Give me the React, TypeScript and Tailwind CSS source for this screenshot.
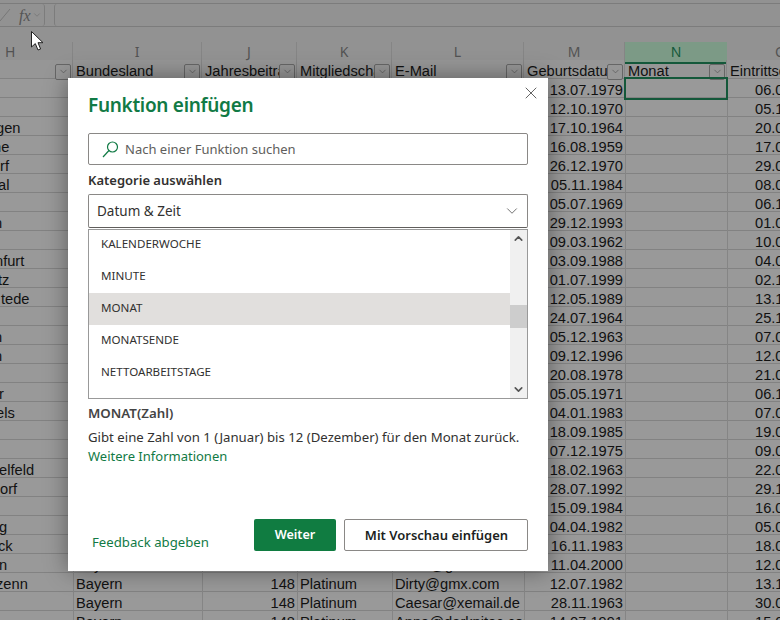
import { ChevronDown, ChevronUp, X } from 'lucide-react';

const columnGrid = 'grid grid-cols-[73px_129px_95px_95px_132px_101px_102px_108px]';

const letters = ['H', 'I', 'J', 'K', 'L', 'M', 'N', 'O'];
const headers = ['', 'Bundesland', 'Jahresbeitrag', 'Mitgliedschaft', 'E-Mail', 'Geburtsdatum', 'Monat', 'Eintrittsdatum'];

const rows = [
  { date: '13.07.1979', start: '06.0', city: '', shift: '' },
  { date: '12.10.1970', start: '05.1', city: '', shift: '' },
  { date: '17.10.1964', start: '20.0', city: 'gen', shift: '-ml-[4px]' },
  { date: '16.08.1959', start: '17.0', city: 'ne', shift: '-ml-[7px]' },
  { date: '26.12.1970', start: '29.0', city: 'rf', shift: '' },
  { date: '05.11.1984', start: '08.0', city: 'al', shift: '-ml-[2px]' },
  { date: '05.07.1969', start: '06.1', city: '', shift: '' },
  { date: '29.12.1993', start: '01.0', city: 'n', shift: '-ml-[6px]' },
  { date: '09.03.1962', start: '10.0', city: '', shift: '' },
  { date: '03.09.1988', start: '04.0', city: 'nfurt', shift: '-ml-[5px]' },
  { date: '01.07.1999', start: '02.1', city: 'tz', shift: '-ml-[2px]' },
  { date: '12.05.1989', start: '13.1', city: 'tede', shift: 'ml-[1px]' },
  { date: '24.07.1964', start: '25.1', city: '', shift: '' },
  { date: '05.12.1963', start: '07.0', city: 'n', shift: '-ml-[6px]' },
  { date: '09.12.1996', start: '12.0', city: 'n', shift: '-ml-[6px]' },
  { date: '20.08.1978', start: '21.0', city: '', shift: '' },
  { date: '05.05.1971', start: '06.1', city: 'r', shift: '-ml-[1px]' },
  { date: '04.01.1983', start: '07.0', city: 'els', shift: '-ml-[4px]' },
  { date: '18.09.1985', start: '19.0', city: '', shift: '' },
  { date: '07.12.1975', start: '09.0', city: '', shift: '' },
  { date: '18.02.1963', start: '22.0', city: 'elfeld', shift: '-ml-[1px]' },
  { date: '28.07.1992', start: '29.1', city: 'orf', shift: '' },
  { date: '15.09.1984', start: '16.0', city: '', shift: '' },
  { date: '04.04.1982', start: '05.0', city: 'g', shift: '-ml-[1px]' },
  { date: '16.11.1983', start: '18.0', city: 'ck', shift: '-ml-[2px]' },
  { date: '11.04.2000', start: '12.0', city: 'n', shift: '-ml-[1px]', state: 'Bayern', fee: '148', plan: 'Platinum', mail: 'Berta@gmx.com' },
  { date: '12.07.1982', start: '13.1', city: 'zenn', shift: '-ml-[4px]', state: 'Bayern', fee: '148', plan: 'Platinum', mail: 'Dirty@gmx.com' },
  { date: '28.11.1963', start: '30.0', city: '', shift: '', state: 'Bayern', fee: '148', plan: 'Platinum', mail: 'Caesar@xemail.de' },
  { date: '14.07.1991', start: '15.0', city: '', shift: '', state: 'Bayern', fee: '148', plan: 'Platinum', mail: 'Anna@darkpitec.com' },
];

const functions = ['KALENDERWOCHE', 'MINUTE', 'MONAT', 'MONATSENDE', 'NETTOARBEITSTAGE'];

function FilterButton() {
  return (
    <span className="mr-[1px] flex size-[16px] shrink-0 items-center justify-center rounded-[2px] border border-[#666] bg-[#969696]">
      <ChevronDown className="size-[11px] text-[#555]" strokeWidth={1.5} />
    </span>
  );
}

function Sheet() {
  return (
    <div className="font-['Liberation_Sans',sans-serif] text-[14.67px] leading-[23px] text-[#111]">
      <div className="h-[42px] bg-[#929292] pt-[3px]">
        <div className="flex h-[24px] gap-[9px] border-y border-[#7c7c7c]">
          <div className="flex w-[45px] shrink-0 items-center rounded-r-[3px] border-r border-[#7c7c7c] text-[#555]">
            <svg className="size-[14px] shrink-0" viewBox="0 0 14 14">
              <path d="M0 13 L10 1" stroke="#777" strokeWidth="1" />
            </svg>
            <span className="ml-[5px] font-['Liberation_Serif',serif] text-[16px] italic">fx</span>
            <ChevronDown className="ml-[1px] size-[10px] text-[#6d6d6d]" strokeWidth={1.5} />
          </div>
          <div className="flex-1 rounded-l-[3px] border-l border-[#7c7c7c]" />
        </div>
      </div>
      <div className={`${columnGrid} h-[18px] bg-[#929292] font-['Noto_Sans',sans-serif] text-[14px] leading-[20px] text-[#525252]`}>
        {letters.map((letter) => (
          <div
            key={letter}
            className={
              letter === 'N'
                ? 'border-b-2 border-[#14583a] bg-[#7c9a86] text-center text-[#14583a]'
                : letter === 'H'
                  ? 'border-r border-[#858585] pl-[5px]'
                  : 'border-r border-[#858585] text-center'
            }
          >
            {letter}
          </div>
        ))}
      </div>
      <div className={`${columnGrid} h-[19px] border-b border-[#828282] bg-[#969696]`}>
        {headers.map((header) => (
          <div key={header} className="flex min-w-0 items-center border-r border-[#858585] pl-[3px]">
            <span className="min-w-0 flex-1 overflow-hidden whitespace-nowrap">{header}</span>
            {header !== 'Eintrittsdatum' && <FilterButton />}
          </div>
        ))}
      </div>
      {rows.map((row, i) => (
        <div key={row.date} className={`${columnGrid} h-[19px] border-b border-[#828282] bg-[#999]`}>
          <div className="overflow-hidden whitespace-nowrap">
            <div className={row.shift}>{row.city}</div>
          </div>
          <div className="border-l border-[#858585] pl-[2px]">{row.state}</div>
          <div className="border-l border-[#858585] pr-[2px] text-right">{row.fee}</div>
          <div className="border-l border-[#858585] pl-[2px]">{row.plan}</div>
          <div className="overflow-hidden whitespace-nowrap border-l border-[#858585] pl-[2px]">{row.mail}</div>
          <div className="border-l border-[#858585] pr-[2px] text-right">{row.date}</div>
          <div className={i === 0 ? 'z-10 -mt-[1px] h-[21px] outline-2 -outline-offset-1 outline-[#14583a]' : 'border-l border-[#858585]'} />
          <div className="overflow-hidden whitespace-nowrap border-l border-[#858585] pl-[27px]">{row.start}</div>
        </div>
      ))}
    </div>
  );
}

function InsertFunctionDialog() {
  return (
    <div className="absolute left-[68px] top-[78px] flex h-[493px] w-[480px] flex-col bg-white px-[20px] font-['Noto_Sans',sans-serif] text-[13.2px] text-[#323130] shadow-[0_0_22px_rgba(0,0,0,0.4)]">
      <button className="absolute right-[7px] top-[5px] text-[#444]">
        <X className="size-[20px]" strokeWidth={1} />
      </button>
      <h1 className="mt-[13px] text-[19px] font-semibold leading-[28px] tracking-[-0.3px] text-[#117a45]">Funktion einfügen</h1>

      <div className="mt-[14px] flex h-[32px] items-center rounded-[2px] border border-[#8a8886] pl-[13px]">
        <svg className="size-[17px] shrink-0" viewBox="0 0 17 17" fill="none" stroke="#117a45" strokeWidth="1.2">
          <circle cx="10.5" cy="6" r="5" />
          <path d="M7 9.5 L1 16" />
        </svg>
        <span className="ml-[6px] pt-[2px] text-[13px] text-[#605e5c]">Nach einer Funktion suchen</span>
      </div>

      <div className="mt-[6px] text-[13px] leading-[18px] font-semibold">Kategorie auswählen</div>

      <div className="mt-[5px] flex h-[34px] items-center justify-between rounded-[2px] border border-[#8a8886] border-b-[#605e5c] px-[8px] pr-[6px]">
        <span className="text-[13.5px]">Datum &amp; Zeit</span>
        <ChevronDown className="size-[18px] text-[#444]" strokeWidth={1} />
      </div>

      <div className="mt-[1px] flex h-[170px] overflow-hidden border border-[#999]">
        <div className="-mt-[1px] min-w-0 flex-1">
          {functions.map((name) => (
            <div
              key={name}
              className={`flex h-[32px] items-center pb-[2px] pl-[12px] text-[11.6px] ${name === 'MONAT' ? 'bg-[#e1dfdd]' : ''}`}
            >
              {name}
            </div>
          ))}
        </div>
        <div className="flex w-[17px] shrink-0 flex-col items-center bg-[#f0f0f0]">
          <ChevronUp className="mt-[2px] size-[13px] text-[#555]" strokeWidth={3} />
          <div className="mt-[60px] h-[23px] w-full bg-[#cdcdcd]" />
          <ChevronDown className="mt-auto mb-[2px] size-[13px] text-[#555]" strokeWidth={3} />
        </div>
      </div>

      <div className="mt-[5px] text-[13.3px] font-semibold leading-[18px] text-[#444]">MONAT(Zahl)</div>
      <p className="mt-[6px] leading-[19px]">Gibt eine Zahl von 1 (Januar) bis 12 (Dezember) für den Monat zurück.</p>
      <a className="text-[13px] leading-[19px] text-[#117a45]">Weitere Informationen</a>

      <div className="mt-auto mb-[20px] flex items-end text-[13px]">
        <a className="-mb-[1px] ml-[4px] mr-auto text-[13.2px] leading-[19px] text-[#117a45]">Feedback abgeben</a>
        <button className="h-[32px] w-[82px] rounded-[2px] bg-[#107c41] pt-[1px] text-[12.6px] font-semibold text-white">Weiter</button>
        <button className="ml-[8px] h-[32px] w-[184px] rounded-[2px] border border-[#8a8886] pl-[1px] pt-[2px] font-semibold text-[#201f1e]">
          Mit Vorschau einfügen
        </button>
      </div>
    </div>
  );
}

export default function App() {
  return (
    <div className="relative h-[620px] w-[780px] overflow-hidden bg-[#999]">
      <Sheet />
      <InsertFunctionDialog />
      {/* mouse pointer */}
      <svg className="absolute left-[31px] top-[31px] h-[20px] w-[13px]" viewBox="0 0 13 20">
        <path d="M0.5 0.5 V16 L4.3 12.6 L7 19 L9.6 18 L7 11.7 L12 11.7 Z" fill="#fff" stroke="#222" strokeWidth="1" />
      </svg>
    </div>
  );
}
